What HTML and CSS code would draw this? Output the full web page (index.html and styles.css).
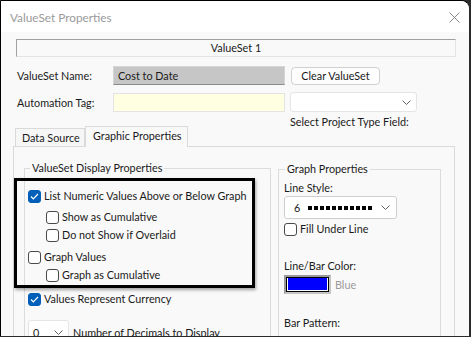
FILE: index.html
```html
<!DOCTYPE html>
<html lang="en">
<head>
    <meta charset="UTF-8">
    <title>ValueSet Properties</title>
    <link rel="stylesheet" href="styles.css">
</head>
<body>
    <div class="window">
        <div class="titlebar">
            <span class="title">ValueSet Properties</span>
            <svg class="close" width="11" height="11" viewBox="0 0 11 11"><path d="M0.5 0.5 L10.5 10.5 M10.5 0.5 L0.5 10.5" stroke="#8a8a8a" stroke-width="1" fill="none"/></svg>
        </div>
        <div class="client">
            <div class="caption-box">ValueSet 1</div>

            <div class="row row-name">
                <span class="label">ValueSet Name:</span>
                <div class="field field-grey">Cost to Date</div>
                <button class="btn">Clear ValueSet</button>
            </div>
            <div class="row row-tag">
                <span class="label">Automation Tag:</span>
                <div class="field field-yellow"></div>
                <div class="combo combo-type">
                    <svg class="chev" width="9" height="5" viewBox="0 0 9 5"><path d="M0.5 0.5 L4.5 4.5 L8.5 0.5" stroke="#606060" fill="none"/></svg>
                </div>
            </div>
            <div class="type-label">Select Project Type Field:</div>

            <div class="tabs">
                <div class="tab">Data Source</div>
                <div class="tab active">Graphic Properties</div>
            </div>
            <div class="panel">
                <fieldset class="group group-display">
                    <legend>ValueSet Display Properties</legend>
                    <div class="check r1"><span class="box on"><svg width="9" height="7" viewBox="0 0 9 7"><path d="M1 3.5 L3.3 5.8 L8 1" stroke="#fff" stroke-width="1.2" fill="none"/></svg></span>List Numeric Values Above or Below Graph</div>
                    <div class="check sub r2"><span class="box"></span>Show as Cumulative</div>
                    <div class="check sub r3"><span class="box"></span>Do not Show if Overlaid</div>
                    <div class="check r4"><span class="box"></span>Graph Values</div>
                    <div class="check sub r5"><span class="box"></span>Graph as Cumulative</div>
                    <div class="check r6"><span class="box on"><svg width="9" height="7" viewBox="0 0 9 7"><path d="M1 3.5 L3.3 5.8 L8 1" stroke="#fff" stroke-width="1.2" fill="none"/></svg></span>Values Represent Currency</div>
                    <div class="decimals">
                        <div class="combo combo-small">
                            <span>0</span>
                            <svg class="chev" width="9" height="5" viewBox="0 0 9 5"><path d="M0.5 0.5 L4.5 4.5 L8.5 0.5" stroke="#606060" fill="none"/></svg>
                        </div>
                        <span>Number of Decimals to Display</span>
                    </div>
                </fieldset>

                <fieldset class="group group-graph">
                    <legend>Graph Properties</legend>
                    <div class="glabel g1">Line Style:</div>
                    <div class="combo combo-line">
                        <span class="num">6</span>
                        <span class="dots"><i></i><i></i><i></i><i></i><i></i><i></i><i></i><i></i><i></i><i></i><i></i></span>
                        <svg class="chev" width="9" height="5" viewBox="0 0 9 5"><path d="M0.5 0.5 L4.5 4.5 L8.5 0.5" stroke="#606060" fill="none"/></svg>
                    </div>
                    <div class="check fill"><span class="box"></span>Fill Under Line</div>
                    <div class="glabel g2">Line/Bar Color:</div>
                    <div class="color-row">
                        <div class="swatch"><div class="swatch-inner"></div></div>
                        <span class="color-name">Blue</span>
                    </div>
                    <div class="glabel g3">Bar Pattern:</div>
                    <div class="combo combo-line combo-pattern"></div>
                </fieldset>
            </div>
        </div>
        <div class="highlight"></div>
    </div>
</body>
</html>
```

FILE: styles.css
```css
html, body {
    margin: 0;
    padding: 0;
}
body {
    width: 471px;
    height: 337px;
    overflow: hidden;
    background: #2b2b2b;
    font-family: Lato, "Noto Sans", sans-serif;
    font-size: 10.8px;
    color: #1a1a1a;
}
.window {
    position: relative;
    margin: 1px 0 0 1px;
    width: 468px;
    height: 335px;
    background: #f9f9f9;
    border-top-right-radius: 8px;
    overflow: hidden;
    box-shadow: -1px 0 0 #000, 0 -1px 0 #000;
}
.titlebar {
    height: 31px;
    background: #fff;
    display: flex;
    align-items: center;
    justify-content: space-between;
    padding: 0 9px 0 9px;
}
.title {
    color: #9a9a9a;
    font-size: 11.8px;
    margin-top: 1px;
}
.close {
    margin-top: 1px;
}
.client {
    padding-left: 12px;
    white-space: nowrap;
}
.caption-box {
    margin: 7px 0 0 3px;
    width: 440px;
    height: 18px;
    box-sizing: border-box;
    border: 1px solid #e4e4e4;
    border-top-color: #a0a0a0;
    border-left-color: #a0a0a0;
    text-align: center;
    line-height: 16px;
}
.row {
    display: flex;
    align-items: center;
    margin-left: 4px;
}
.row-name {
    margin-top: 9px;
}
.row-tag {
    margin-top: 7px;
}
.label {
    width: 96px;
}
.field {
    width: 172px;
    height: 19px;
    box-sizing: border-box;
    line-height: 17px;
    padding-left: 4px;
}
.field-grey {
    background: #c6c6c6;
    border: 1px solid #d5d5d5;
    border-bottom-color: #8a8a8a;
}
.field-yellow {
    background: #ffffe1;
    border: 1px solid #e3e3e3;
}
.btn {
    margin-left: 6px;
    width: 89px;
    height: 18px;
    padding: 0;
    font: inherit;
    color: #1a1a1a;
    background: #fdfdfd;
    border: 1px solid #d0d0d0;
    border-radius: 4px;
    line-height: 16px;
}
.combo {
    box-sizing: border-box;
    background: #fff;
    border: 1px solid #e5e5e5;
    border-radius: 3px;
    display: flex;
    align-items: center;
    position: relative;
}
.combo .chev {
    margin-left: auto;
}
.combo-type {
    margin-left: 5px;
    width: 127px;
    height: 20px;
    padding-right: 5px;
}
.type-label {
    margin: 2px 0 0 277px;
    line-height: 16px;
}
.tabs {
    display: flex;
    align-items: flex-end;
    margin: -4px 0 0 2px;
    height: 20px;
}
.tab {
    box-sizing: border-box;
    height: 18px;
    border: 1px solid #dadada;
    border-bottom: none;
    padding: 0 0 0 6px;
    width: 70px;
    line-height: 17px;
    background: #f6f6f6;
}
.tab.active {
    height: 21px;
    width: 103px;
    margin-bottom: -1px;
    background: #f9f9f9;
    padding-left: 7px;
    line-height: 18px;
    position: relative;
}
.panel {
    width: 442px;
    height: 200px;
    box-sizing: border-box;
    border: 1px solid #dadada;
    display: flex;
    align-items: flex-start;
    padding-left: 10px;
}
fieldset.group {
    margin: 0;
    padding: 0;
    border: 1px solid #dcdcdc;
    min-width: 0;
    box-sizing: border-box;
}
legend {
    padding: 0 2px;
    line-height: 16px;
}
.group-display {
    margin-top: 13px !important;
    width: 247px;
    height: 200px;
    padding-left: 3px !important;
}
.group-display legend {
    margin-left: 2px;
}
.group-graph {
    margin: 14px 0 0 7px !important;
    width: 163px;
    height: 200px;
    padding-left: 5px !important;
}
.group-graph legend {
    margin-left: 1px;
}
.check {
    display: flex;
    align-items: center;
    height: 14px;
    line-height: 14px;
}
.check.sub {
    padding-left: 18px;
}
.box {
    width: 13px;
    height: 13px;
    box-sizing: border-box;
    border: 1px solid #4a4a4a;
    border-radius: 3px;
    background: #fff;
    margin-right: 3px;
    display: flex;
    align-items: center;
    justify-content: center;
    flex: none;
}
.box.on {
    background: #005fb8;
    border-color: #005fb8;
}
.r1 { margin-top: 13px; }
.r2 { margin-top: 7px; }
.r3 { margin-top: 4px; }
.r4 { margin-top: 8px; }
.r5 { margin-top: 4px; }
.r6 { margin-top: 10px; }
.decimals {
    display: flex;
    align-items: center;
    margin-top: 14px;
}
.combo-small {
    width: 41px;
    height: 24px;
    padding: 0 5px 0 4px;
    margin-right: 4px;
}
.glabel {
    line-height: 16px;
}
.g1 { margin-top: 3px; }
.g2 { margin-top: 22px; }
.g3 { margin-top: 21px; }
.combo-line {
    width: 113px;
    height: 23px;
    padding: 0 6px 0 9px;
    border-color: #cfcfcf;
}
.num {
    margin-right: 8px;
}
.dots {
    display: flex;
    gap: 2px;
}
.dots i {
    width: 4px;
    height: 4px;
    background: #000;
}
.fill {
    margin-top: 3px;
}
.color-row {
    display: flex;
    align-items: center;
    margin-top: 1px;
}
.swatch {
    width: 47px;
    height: 19px;
    box-sizing: border-box;
    border: 2px solid #9a9a9a;
    border-right-color: #c4c4c4;
    border-bottom-color: #c4c4c4;
}
.swatch-inner {
    height: 100%;
    box-sizing: border-box;
    border: 1px solid #000;
    background: #0000ff;
    box-shadow: inset -1px -1px 0 #fff, inset 1px 0 0 #fff;
}
.color-name {
    color: #9a9a9a;
    margin-left: 4px;
}
.combo-pattern {
    margin-top: 6px;
}
.highlight {
    position: absolute;
    left: 13px;
    top: 177px;
    width: 241px;
    height: 110px;
    box-sizing: border-box;
    border: 3px solid #000;
    box-shadow: 1px 2px 3px rgba(0, 0, 0, 0.35);
}
```
